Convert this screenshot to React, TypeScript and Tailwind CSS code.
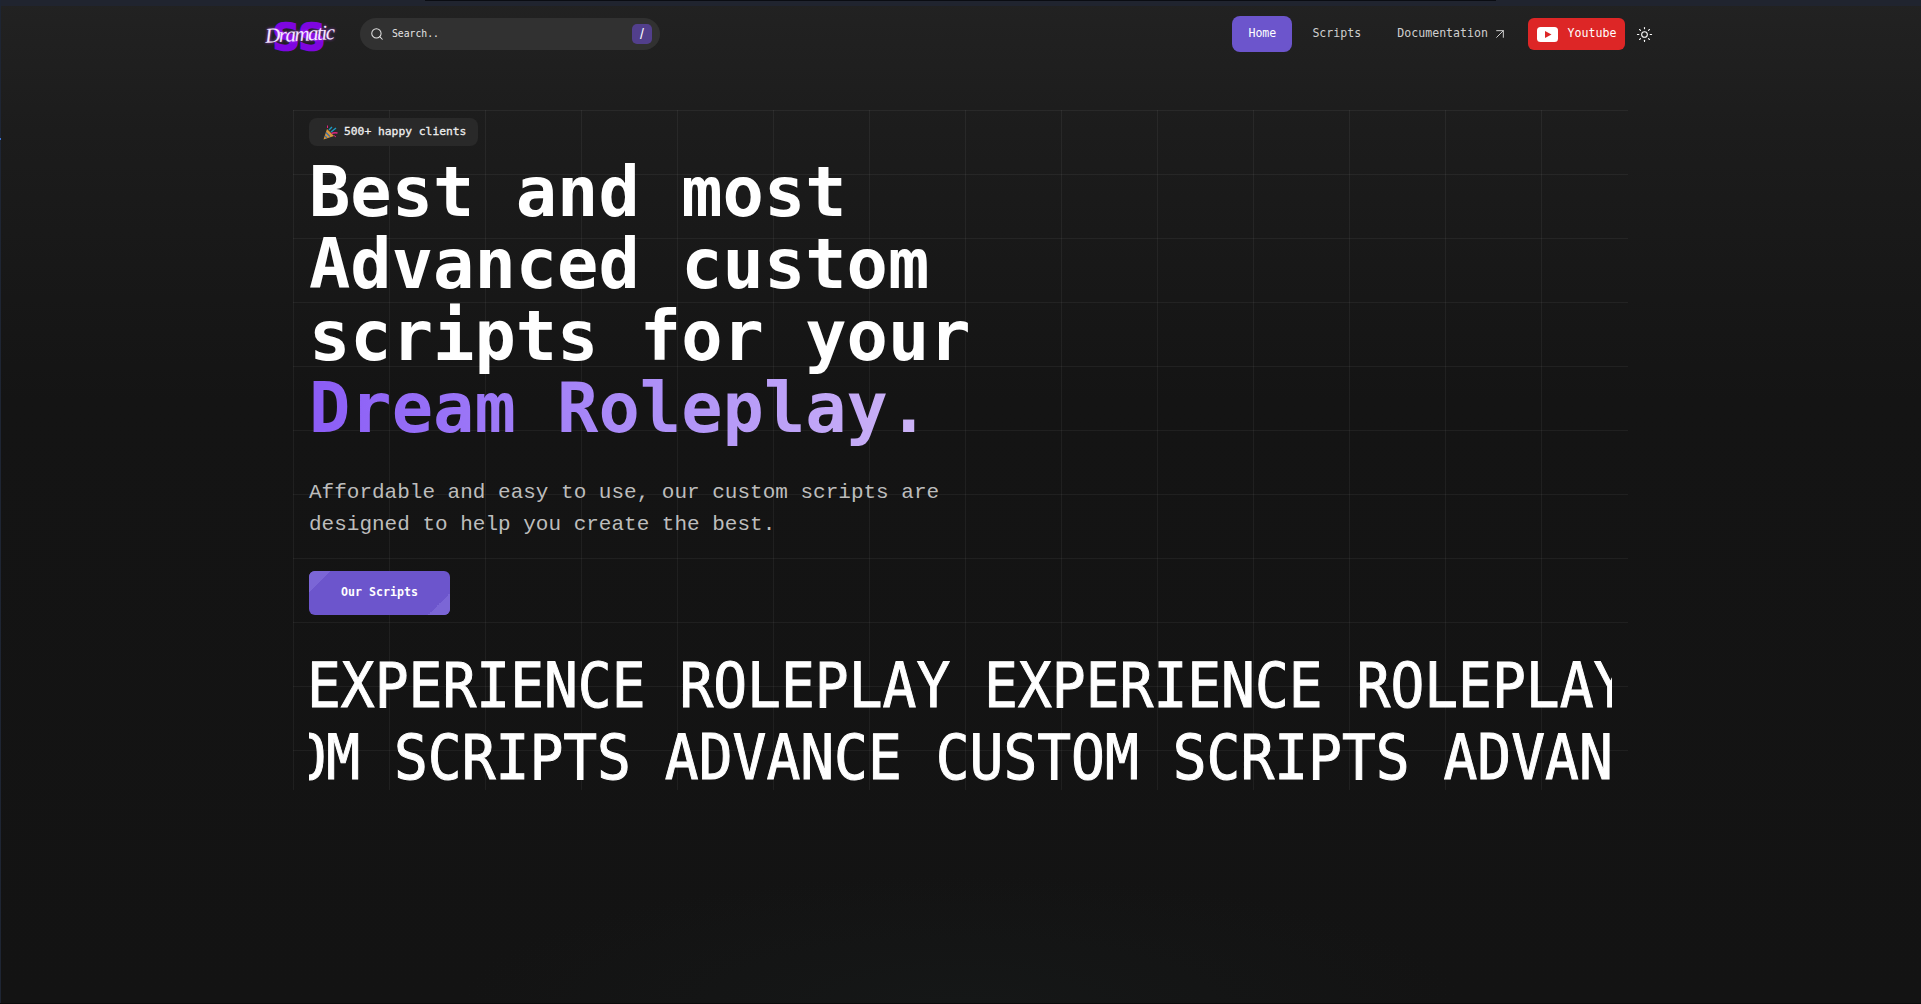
import { ArrowUpRight, Search, Sun } from "lucide-react";

const mono = "font-['DejaVu_Sans_Mono','Liberation_Mono',monospace]";
const thin = "font-['Liberation_Mono','DejaVu_Sans_Mono',monospace]";

function Logo() {
  return (
    <a className="relative flex h-[32px] w-[68px] items-center justify-center">
      <span className="absolute inset-0 flex items-center justify-center pt-[5px] font-['DejaVu_Sans',sans-serif] text-[38px] leading-none font-bold text-[#7e06e0] [-webkit-text-stroke:1.5px_#7e06e0]">
        SS
      </span>
      <span className="relative -rotate-3 font-['Liberation_Serif',serif] text-[21px] leading-none tracking-[-1.5px] text-[#f4e6ff] italic [text-shadow:0_0_3px_#b040f0]">
        Dramatic
      </span>
    </a>
  );
}

function SearchBox() {
  return (
    <div className="flex h-[32px] w-[300px] items-center rounded-full bg-[#313131] pr-[8px] pl-[10px] text-[#e4e4e4]">
      <Search size={14} strokeWidth={1.75} />
      <span className={`${mono} ml-[8px] flex-1 pt-px text-[9.75px]`}>Search..</span>
      <kbd className="flex size-[20px] items-center justify-center rounded-[5px] bg-[#523f8c] font-['Liberation_Sans',sans-serif] text-[14px] text-white">
        /
      </kbd>
    </div>
  );
}

function YoutubeIcon() {
  return (
    <svg width="21" height="15" viewBox="0 0 21 15" aria-hidden="true">
      <rect width="21" height="15" rx="3.5" fill="#fff" />
      <path d="M8 4l6.5 3.5L8 11z" fill="#dd2626" />
    </svg>
  );
}

function Party() {
  return (
    <svg width="15" height="15" viewBox="0 0 15 15" aria-hidden="true">
      <path d="M0.5 14.5L4 4l7 7z" fill="#d9973c" />
      <path d="M2 11l2 2M3 7.5l4 4" stroke="#3a6ea8" strokeWidth="1.2" />
      <path d="M6 5l3-3M8 7l5-4" stroke="#1d9bc4" strokeWidth="1.4" />
      <path d="M8.5 8.5c2-1 4-1 6-.5" stroke="#e0247f" strokeWidth="1.4" fill="none" />
      <path d="M4.5 3V0.5M11 10.5l2 1.5" stroke="#e0247f" strokeWidth="1" />
    </svg>
  );
}

function Navbar() {
  return (
    <header className="mx-auto flex h-[56px] w-[1391px] shrink-0 items-center">
      <Logo />
      <div className="ml-[27px]">
        <SearchBox />
      </div>
      <nav className={`${mono} ml-auto flex items-center text-[11.6px] text-[#cfcfcf]`}>
        <a className="flex h-[36px] w-[60px] items-center justify-center rounded-[8px] bg-[#6c55cc] text-white">
          Home
        </a>
        <a className="ml-[20px]">Scripts</a>
        <a className="ml-[36px] flex items-center gap-[4px]">
          Documentation
          <ArrowUpRight size={16} strokeWidth={1.5} />
        </a>
        <a className="ml-[20px] flex h-[32px] w-[97px] items-center justify-center gap-[10px] rounded-[6px] bg-[#dd2626] text-white">
          <YoutubeIcon />
          Youtube
        </a>
        <Sun className="mr-[3px] ml-[11px] text-white" size={17} strokeWidth={1.5} />
      </nav>
    </header>
  );
}

function MarqueeRow({ text, offset }: { text: string; offset: string }) {
  return (
    <div className="overflow-hidden">
      <div className={`${offset} w-max origin-left scale-x-[0.907] ${mono} text-[62px] leading-[72px] whitespace-pre text-white [-webkit-text-stroke:1px_white]`}>
        {text}
      </div>
    </div>
  );
}

function Hero() {
  return (
    <section className="mx-auto mt-[48px] flex h-[680px] w-[1335px] flex-col bg-[linear-gradient(to_right,rgba(255,255,255,0.05)_1px,transparent_1px),linear-gradient(to_bottom,rgba(255,255,255,0.05)_1px,transparent_1px)] bg-[size:96px_64px] px-[16px] pt-[8px]">
      <div className={`${mono} flex h-[28px] w-[169px] shrink-0 items-center gap-[6px] rounded-[8px] bg-[#292929] pl-[14px] text-[11.3px] text-[#eeeeee] [-webkit-text-stroke:0.3px_#eeeeee]`}>
        <Party />
        500+ happy clients
      </div>
      <h1 className={`${mono} mt-[10px] text-[68.7px] leading-[72px] font-bold text-white`}>
        Best and most
        <br />
        Advanced custom
        <br />
        scripts for your
        <br />
        <span className="bg-gradient-to-r from-[#8b5cf6] to-[#cdb4f6] bg-clip-text text-transparent">
          Dream Roleplay.
        </span>
      </h1>
      <p className={`${thin} mt-[33px] text-[21px] leading-[32px] text-[#bdbdbd]`}>
        Affordable and easy to use, our custom scripts are
        <br />
        designed to help you create the best.
      </p>
      <a className={`${mono} relative mt-[30px] flex h-[44px] w-[141px] shrink-0 items-center justify-center overflow-hidden rounded-[6px] bg-[#6c55cc] text-[11.6px] font-bold text-white`}>
        <span className="absolute top-0 left-0 size-[22px] bg-[linear-gradient(135deg,#7b66d6_50%,transparent_50%)]" />
        <span className="absolute right-0 bottom-0 size-[22px] bg-[linear-gradient(315deg,#7b66d6_50%,transparent_50%)]" />
        <span className="relative">Our Scripts</span>
      </a>
      <div className="mt-[35px]">
        <MarqueeRow text="EXPERIENCE ROLEPLAY EXPERIENCE ROLEPLAY EXPERIENCE" offset="ml-[-2px]" />
        <MarqueeRow text="CUSTOM SCRIPTS ADVANCE CUSTOM SCRIPTS ADVANCE CUSTOM" offset="ml-[-152px]" />
      </div>
    </section>
  );
}

export default function App() {
  return (
    <div className="relative h-[1004px] overflow-hidden bg-[radial-gradient(ellipse_500px_130px_at_50%_100%,#151717_0%,transparent_100%),linear-gradient(to_bottom,#222222_0px,#1c1c1c_130px,#141414_400px,#131313_100%)]">
      <div className="h-[6px] bg-[#20242f]">
        <div className="mx-auto h-px w-[1071px] bg-[#0a0c12]" />
      </div>
      <Navbar />
      <Hero />
      {/* edge artefacts from the captured page */}
      <div className="absolute top-0 left-0 h-full w-px bg-[#1e2533]" />
      <div className="absolute top-[138px] left-0 h-[2px] w-px bg-[#3b74d8]" />
      <div className="absolute bottom-0 left-0 h-px w-full bg-[#0b0b0b]" />
    </div>
  );
}
